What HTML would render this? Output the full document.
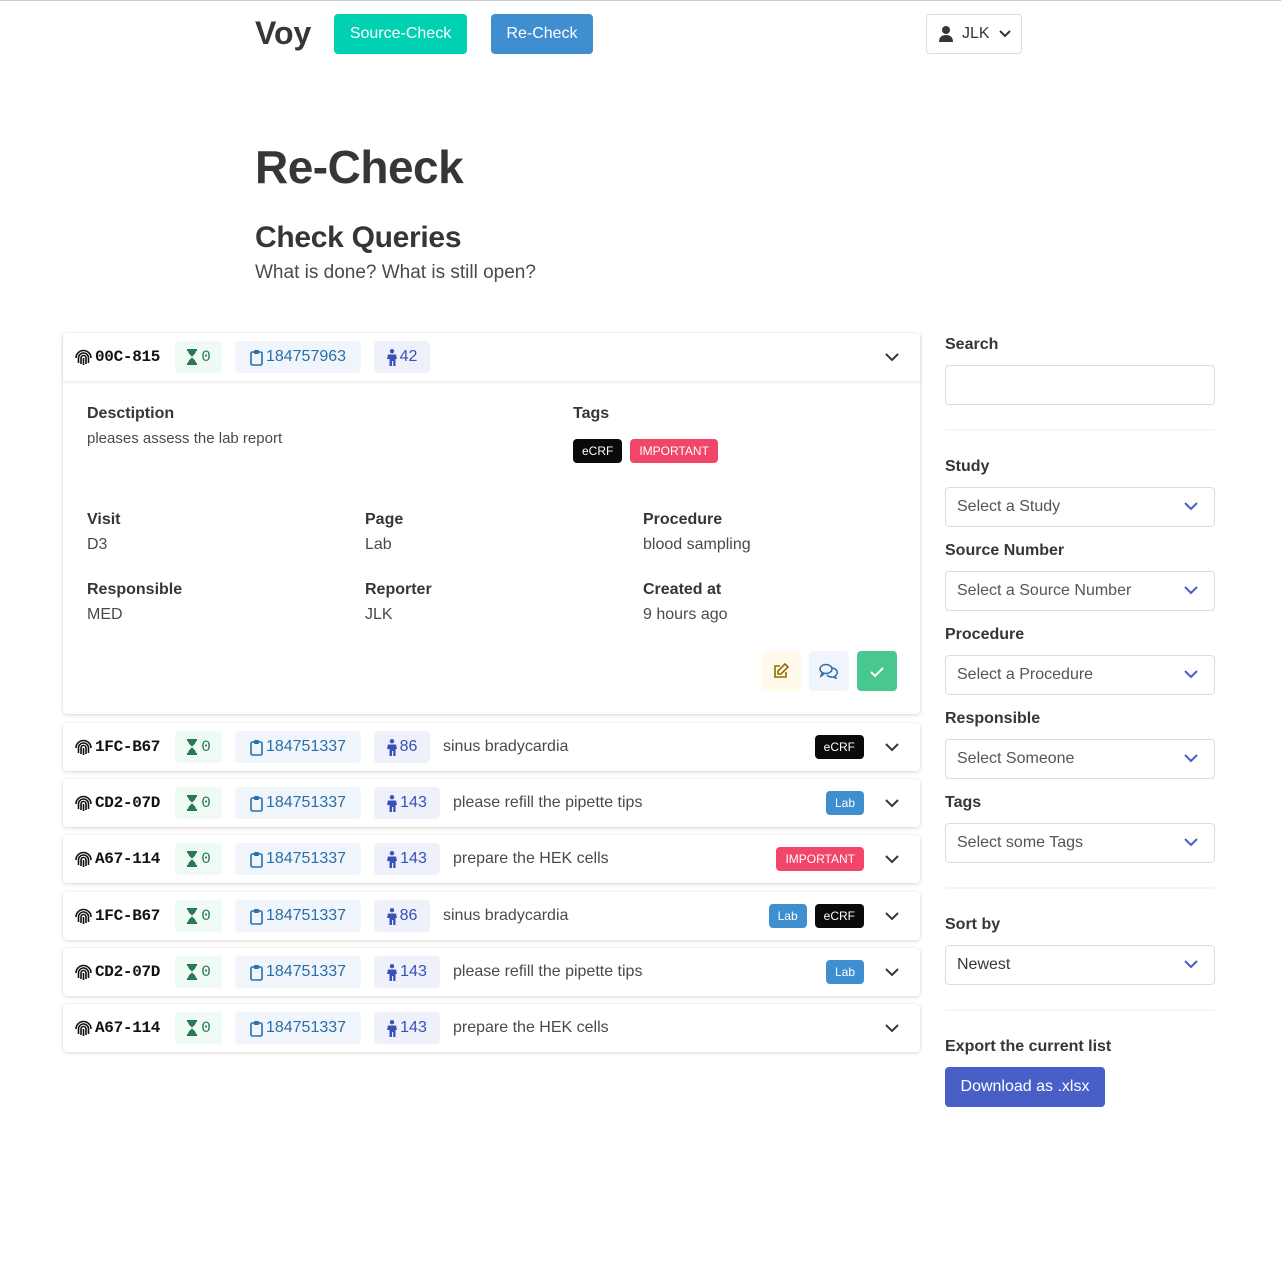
<!DOCTYPE html>
<html><head><meta charset="utf-8"><style>
*{box-sizing:border-box;margin:0;padding:0}
body{width:1281px;height:1282px;background:#fff;font-family:"Liberation Sans",sans-serif;color:#4a4a4a;position:relative;border-top:1px solid #ccc;overflow:hidden}
.abs{position:absolute}
.btn{position:absolute;height:40px;border-radius:4px;color:#fff;font-size:16px;display:flex;align-items:center;justify-content:center}
.card{position:absolute;left:63px;width:857px;background:#fff;border-radius:4px;box-shadow:0 1px 4px rgba(10,10,10,.15),0 0 0 1px rgba(10,10,10,.02)}
.row{height:48px;display:flex;align-items:center;padding-left:12px;padding-right:10px;font-size:16px}
.id{font-family:"Liberation Mono",monospace;font-weight:bold;color:#111;font-size:16px;margin-left:3px;width:80px;display:flex;align-items:center;letter-spacing:-0.3px}
.tag{height:32px;border-radius:4px;display:flex;align-items:center;justify-content:center;font-size:16px;margin-right:13px}
.tag svg{margin-right:3px}
.g{background:#effaf5;color:#257953;font-family:"Liberation Mono",monospace;width:47px}
.b{background:#eff5fb;color:#296fa8;width:126px}
.p{background:#eff1fa;color:#3850b7;width:56px}
.p.w{width:66px}
.desc{color:#4a4a4a;flex:1}
.sm{height:24px;border-radius:4px;font-size:12px;color:#fff;padding:0 9px;display:flex;align-items:center;margin-left:8px}
.k{background:#0a0a0a}.l{background:#3e8ed0}.r{background:#f14668}
.chev{width:36px;margin-left:10px;display:flex;justify-content:center}
.lbl{position:absolute;font-weight:bold;color:#363636;font-size:16px}
.val{position:absolute;font-size:16px;color:#4a4a4a}
.sel{position:absolute;left:945px;width:270px;height:40px;border:1px solid #dbdbdb;border-radius:4px;font-size:16px;color:#555;padding-left:11px;display:flex;align-items:center}
.sel svg{position:absolute;right:16px;top:14px}
.hr{position:absolute;left:945px;width:270px;height:2px;background:#f5f5f5}
</style></head><body>
<div class="abs" style="left:255px;top:14px;font-size:32px;font-weight:bold;color:#363636">Voy</div>
<div class="btn" style="left:334px;top:13px;width:133px;background:#00d1b2">Source-Check</div>
<div class="btn" style="left:491px;top:13px;width:102px;background:#3e8ed0">Re-Check</div>
<div class="abs" style="left:926px;top:13px;width:96px;height:40px;border:1px solid #dbdbdb;border-radius:4px;display:flex;align-items:center;padding-left:12px;font-size:16px;color:#363636">
<svg width="14" height="16" viewBox="0 0 14 16"><circle cx="7" cy="4" r="4" fill="#363636"/><path d="M0 16c0-5 3-7 7-7s7 2 7 7z" fill="#363636"/></svg><span style="margin-left:9px">JLK</span>
<svg style="margin-left:9px" width="12" height="8" viewBox="0 0 12 8"><path d="M1 1l5 5 5-5" stroke="#363636" stroke-width="2" fill="none"/></svg></div>
<div class="abs" style="left:255px;top:139px;font-size:46px;font-weight:bold;color:#363636;letter-spacing:-0.5px">Re-Check</div>
<div class="abs" style="left:255px;top:220px;font-size:30px;font-weight:bold;color:#363636;letter-spacing:-0.3px">Check Queries</div>
<div class="abs" style="left:255px;top:261px;font-size:19px;color:#4a4a4a">What is done? What is still open?</div>

<div class="card" style="top:332px;height:381px">
<div class="row" style="box-shadow:0 2px 3px rgba(10,10,10,.08)" id="r0"></div>
<div class="lbl" style="left:24px;top:72px">Desctiption</div><div class="val" style="left:24px;top:97px;font-size:15px">pleases assess the lab report</div>
<div class="lbl" style="left:510px;top:72px">Tags</div>
<div class="abs" style="left:502px;top:106px;display:flex"><span class="sm k">eCRF</span><span class="sm r">IMPORTANT</span></div>
<div class="lbl" style="left:24px;top:178px">Visit</div><div class="val" style="left:24px;top:203px">D3</div>
<div class="lbl" style="left:302px;top:178px">Page</div><div class="val" style="left:302px;top:203px">Lab</div>
<div class="lbl" style="left:580px;top:178px">Procedure</div><div class="val" style="left:580px;top:203px">blood sampling</div>
<div class="lbl" style="left:24px;top:248px">Responsible</div><div class="val" style="left:24px;top:273px">MED</div>
<div class="lbl" style="left:302px;top:248px">Reporter</div><div class="val" style="left:302px;top:273px">JLK</div>
<div class="lbl" style="left:580px;top:248px">Created at</div><div class="val" style="left:580px;top:273px">9 hours ago</div>
<div class="abs" style="left:698px;top:318px;width:40px;height:40px;border-radius:4px;background:#fffaeb;display:flex;align-items:center;justify-content:center"><svg width="16" height="16" viewBox="0 0 16 16" fill="none" stroke="#946c00" stroke-width="1.6"><path d="M7 3H2v11h11V9"/><path d="M12 1l3 3-7 7H5V8z"/></svg></div>
<div class="abs" style="left:746px;top:318px;width:40px;height:40px;border-radius:4px;background:#eff5fb;display:flex;align-items:center;justify-content:center"><svg width="20" height="16" viewBox="0 0 20 16" fill="none" stroke="#296fa8" stroke-width="1.5"><ellipse cx="7" cy="6" rx="6" ry="4.5"/><path d="M3 10l-1 3 3-2"/><path d="M13 5a6 4.5 0 0 1 3 8l1 2-3-1a6 4 0 0 1-6-2"/></svg></div>
<div class="abs" style="left:794px;top:318px;width:40px;height:40px;border-radius:4px;background:#48c78e;display:flex;align-items:center;justify-content:center"><svg width="14" height="11"><path d="M1 6l4 4 8-8" stroke="#fff" stroke-width="2" fill="none"/></svg></div>
</div>

<div id="rows"></div>
<script>
var fp='<svg width="17" height="16" viewBox="0 0 17 16"><g fill="none" stroke="#111" stroke-width="1.6"><path d="M1 9a7.5 7.5 0 0 1 15 0"/><path d="M3.5 14V9a5 5 0 0 1 10 0v5"/><path d="M6 15V9a2.5 2.5 0 0 1 5 0v6"/><path d="M8.5 9v7"/></g></svg>';
var hg='<svg width="12" height="16" viewBox="0 0 12 16"><path d="M1 1h10M1 15h10" stroke="#257953" stroke-width="2"/><path d="M2 1.5h8c0 4-4 5-4 6.5 0 1.5 4 2.5 4 6.5H2c0-4 4-5 4-6.5C6 6.5 2 5.5 2 1.5z" fill="#257953"/></svg>';
var cb='<svg width="13" height="17" viewBox="0 0 13 17"><rect x="1" y="3" width="11" height="13" rx="1.5" fill="none" stroke="#296fa8" stroke-width="1.6"/><rect x="4" y="1" width="5" height="4" rx="1" fill="#296fa8"/></svg>';
var pr='<svg width="10" height="17" viewBox="0 0 10 17"><circle cx="5" cy="2.2" r="2.2" fill="#3850b7"/><path d="M1 5.5h8L10 10H8.5v7h-2.3v-5h-1.2v5H2.5v-7H0z" fill="#3850b7"/></svg>';
var chev='<span class="chev"><svg width="14" height="9"><path d="M1 1l6 6 6-6" stroke="#363636" stroke-width="2" fill="none"/></svg></span>';
function row(id,n,c,desc,tags){var h=fp+'<span class="id">'+id+'</span><span class="tag g">'+hg+'0</span><span class="tag b">'+cb+c+'</span><span class="tag p'+(n.length>2?' w':'')+'">'+pr+n+'</span><span class="desc">'+desc+'</span>';tags.forEach(function(t){h+='<span class="sm '+t[0]+'">'+t[1]+'</span>'});return h+chev;}
document.getElementById('r0').innerHTML=row('00C-815','42','184757963','',[]);
var d=[[722,'1FC-B67','86','184751337','sinus bradycardia',[['k','eCRF']]],
[778,'CD2-07D','143','184751337','please refill the pipette tips',[['l','Lab']]],
[834,'A67-114','143','184751337','prepare the HEK cells',[['r','IMPORTANT']]],
[891,'1FC-B67','86','184751337','sinus bradycardia',[['l','Lab'],['k','eCRF']]],
[947,'CD2-07D','143','184751337','please refill the pipette tips',[['l','Lab']]],
[1003,'A67-114','143','184751337','prepare the HEK cells',[]]];
var h='';d.forEach(function(r){h+='<div class="card" style="top:'+r[0]+'px;height:48px"><div class="row">'+row(r[1],r[2],r[3],r[4],r[5])+'</div></div>'});
document.getElementById('rows').innerHTML=h;
</script>

<div class="lbl" style="left:945px;top:335px">Search</div>
<div class="abs" style="left:945px;top:364px;width:270px;height:40px;border:1px solid #dbdbdb;border-radius:4px"></div>
<div class="hr" style="top:428px"></div>
<div class="lbl" style="left:945px;top:457px">Study</div>
<div class="sel" style="top:486px">Select a Study<svg width="14" height="9"><path d="M1 1l6 6 6-6" stroke="#485fc7" stroke-width="2" fill="none"/></svg></div>
<div class="lbl" style="left:945px;top:541px">Source Number</div>
<div class="sel" style="top:570px">Select a Source Number<svg width="14" height="9"><path d="M1 1l6 6 6-6" stroke="#485fc7" stroke-width="2" fill="none"/></svg></div>
<div class="lbl" style="left:945px;top:625px">Procedure</div>
<div class="sel" style="top:654px">Select a Procedure<svg width="14" height="9"><path d="M1 1l6 6 6-6" stroke="#485fc7" stroke-width="2" fill="none"/></svg></div>
<div class="lbl" style="left:945px;top:709px">Responsible</div>
<div class="sel" style="top:738px">Select Someone<svg width="14" height="9"><path d="M1 1l6 6 6-6" stroke="#485fc7" stroke-width="2" fill="none"/></svg></div>
<div class="lbl" style="left:945px;top:793px">Tags</div>
<div class="sel" style="top:822px">Select some Tags<svg width="14" height="9"><path d="M1 1l6 6 6-6" stroke="#485fc7" stroke-width="2" fill="none"/></svg></div>
<div class="hr" style="top:886px"></div>
<div class="lbl" style="left:945px;top:915px">Sort by</div>
<div class="sel" style="top:944px;color:#363636">Newest<svg width="14" height="9"><path d="M1 1l6 6 6-6" stroke="#485fc7" stroke-width="2" fill="none"/></svg></div>
<div class="hr" style="top:1008px"></div>
<div class="lbl" style="left:945px;top:1037px">Export the current list</div>
<div class="btn" style="left:945px;top:1066px;width:160px;background:#485fc7">Download as .xlsx</div>
</body></html>
